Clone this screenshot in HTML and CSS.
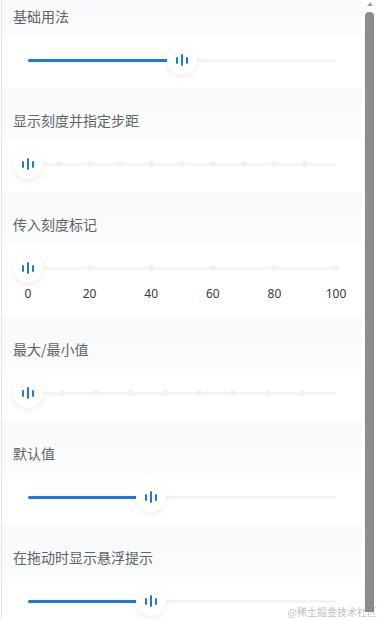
FILE: index.html
```html
<!DOCTYPE html>
<html lang="zh">
<head>
<meta charset="utf-8">
<title>Slider</title>
<link rel="stylesheet" href="styles.css">
</head>
<body>
<div class="page">
  <section class="demo">
    <h2 class="demo-title">基础用法</h2>
    <div class="demo-body">
      <div class="slider">
        <div class="track">
          <div class="bar" style="width:50%"></div>
          <div class="thumb" style="left:50%"><i></i><i class="mid"></i><i></i></div>
        </div>
      </div>
    </div>
  </section>

  <section class="demo">
    <h2 class="demo-title">显示刻度并指定步距</h2>
    <div class="demo-body">
      <div class="slider">
        <div class="track">
          <span class="dot" style="left:10%"></span>
          <span class="dot" style="left:20%"></span>
          <span class="dot" style="left:30%"></span>
          <span class="dot" style="left:40%"></span>
          <span class="dot" style="left:50%"></span>
          <span class="dot" style="left:60%"></span>
          <span class="dot" style="left:70%"></span>
          <span class="dot" style="left:80%"></span>
          <span class="dot" style="left:90%"></span>
          <div class="thumb" style="left:0%"><i></i><i class="mid"></i><i></i></div>
        </div>
      </div>
    </div>
  </section>

  <section class="demo">
    <h2 class="demo-title">传入刻度标记</h2>
    <div class="demo-body">
      <div class="slider">
        <div class="track">
          <span class="dot" style="left:20%"></span>
          <span class="dot" style="left:40%"></span>
          <span class="dot" style="left:60%"></span>
          <span class="dot" style="left:80%"></span>
          <span class="dot" style="left:100%"></span>
          <div class="thumb" style="left:0%"><i></i><i class="mid"></i><i></i></div>
        </div>
      </div>
      <div class="marks">
        <span class="mark" style="left:0%">0</span>
        <span class="mark" style="left:20%">20</span>
        <span class="mark" style="left:40%">40</span>
        <span class="mark" style="left:60%">60</span>
        <span class="mark" style="left:80%">80</span>
        <span class="mark" style="left:100%">100</span>
      </div>
    </div>
  </section>

  <section class="demo">
    <h2 class="demo-title">最大/最小值</h2>
    <div class="demo-body">
      <div class="slider">
        <div class="track">
          <span class="dot" style="left:11.11%"></span>
          <span class="dot" style="left:22.22%"></span>
          <span class="dot" style="left:33.33%"></span>
          <span class="dot" style="left:44.44%"></span>
          <span class="dot" style="left:55.56%"></span>
          <span class="dot" style="left:66.67%"></span>
          <span class="dot" style="left:77.78%"></span>
          <span class="dot" style="left:88.89%"></span>
          <div class="thumb" style="left:0%"><i></i><i class="mid"></i><i></i></div>
        </div>
      </div>
    </div>
  </section>

  <section class="demo">
    <h2 class="demo-title">默认值</h2>
    <div class="demo-body">
      <div class="slider">
        <div class="track">
          <div class="bar" style="width:40%"></div>
          <div class="thumb" style="left:40%"><i></i><i class="mid"></i><i></i></div>
        </div>
      </div>
    </div>
  </section>

  <section class="demo">
    <h2 class="demo-title">在拖动时显示悬浮提示</h2>
    <div class="demo-body">
      <div class="slider">
        <div class="track">
          <div class="bar" style="width:40%"></div>
          <div class="thumb" style="left:40%"><i></i><i class="mid"></i><i></i></div>
        </div>
      </div>
    </div>
  </section>
</div>

<div class="watermark">@稀土掘金技术社区</div>
<div class="scrollbar">
  <span class="arrow"></span>
  <span class="sb-thumb"></span>
</div>
</body>
</html>
```

FILE: styles.css
```css
html, body {
  margin: 0;
  padding: 0;
  background: #ffffff;
  overflow: hidden;
}

body {
  font-family: "Noto Sans CJK SC", "Noto Sans", sans-serif;
  height: 620px;
}

.page {
  margin-left: 1px;
  width: 361px;
  border-left: 1px solid #e4e4e4;
  min-height: 620px;
  background: #ffffff;
}

.demo-title {
  margin: 0;
  padding: 24px 11px 12px;
  font-size: 14px;
  line-height: 16px;
  font-weight: 400;
  color: #606468;
  background: linear-gradient(180deg, #f8fafc 0%, #f9fbfd 100%);
}

.demo:first-child .demo-title {
  padding-top: 8px;
}

.demo-body {
  background: #ffffff;
  padding: 10px 27px 14px 26px;
}

.slider {
  height: 28px;
  display: flex;
  align-items: center;
}

.track {
  position: relative;
  flex: 1;
  height: 3px;
  border-radius: 2px;
  background: #f3f4f6;
}

.bar {
  height: 100%;
  border-radius: 2px;
  background: #1e78e4;
}

.dot {
  position: absolute;
  top: 50%;
  width: 6px;
  height: 6px;
  margin: -3px 0 0 -3px;
  border-radius: 50%;
  background: #f0f1f3;
}

.thumb {
  position: absolute;
  top: 50%;
  width: 30px;
  height: 30px;
  margin: -15px 0 0 -15px;
  border-radius: 50%;
  background: #ffffff;
  box-shadow: 0 2px 6px rgba(0, 0, 0, 0.08);
  display: flex;
  align-items: center;
  justify-content: center;
  gap: 3px;
}

.thumb i {
  display: block;
  width: 2px;
  height: 7px;
  border-radius: 1px;
  background: #1e78e4;
}

.thumb i.mid {
  height: 12px;
}

.marks {
  position: relative;
  height: 18px;
  margin-top: 3px;
}

.mark {
  position: absolute;
  top: 0;
  transform: translateX(-50%);
  font-family: "Noto Sans", "Noto Sans CJK SC", sans-serif;
  font-size: 12px;
  line-height: 18px;
  color: #3a3a3a;
}

.watermark {
  position: fixed;
  right: 0;
  bottom: 2px;
  font-family: "Noto Sans CJK SC", serif;
  font-size: 10px;
  line-height: 12px;
  color: #bdbdbd;
  white-space: nowrap;
}

.scrollbar {
  position: fixed;
  top: 0;
  right: 0;
  width: 14px;
  height: 620px;
  background: rgba(255, 255, 255, 0.2);
}

.arrow {
  position: absolute;
  top: 2px;
  left: 4px;
  width: 0;
  height: 0;
  border-left: 3px solid transparent;
  border-right: 3px solid transparent;
  border-bottom: 4px solid #a3a3a3;
}

.sb-thumb {
  position: absolute;
  top: 12px;
  left: 2px;
  width: 9px;
  height: 600px;
  border-radius: 4px 4px 0 0;
  background: #8b8b8b;
}
```
